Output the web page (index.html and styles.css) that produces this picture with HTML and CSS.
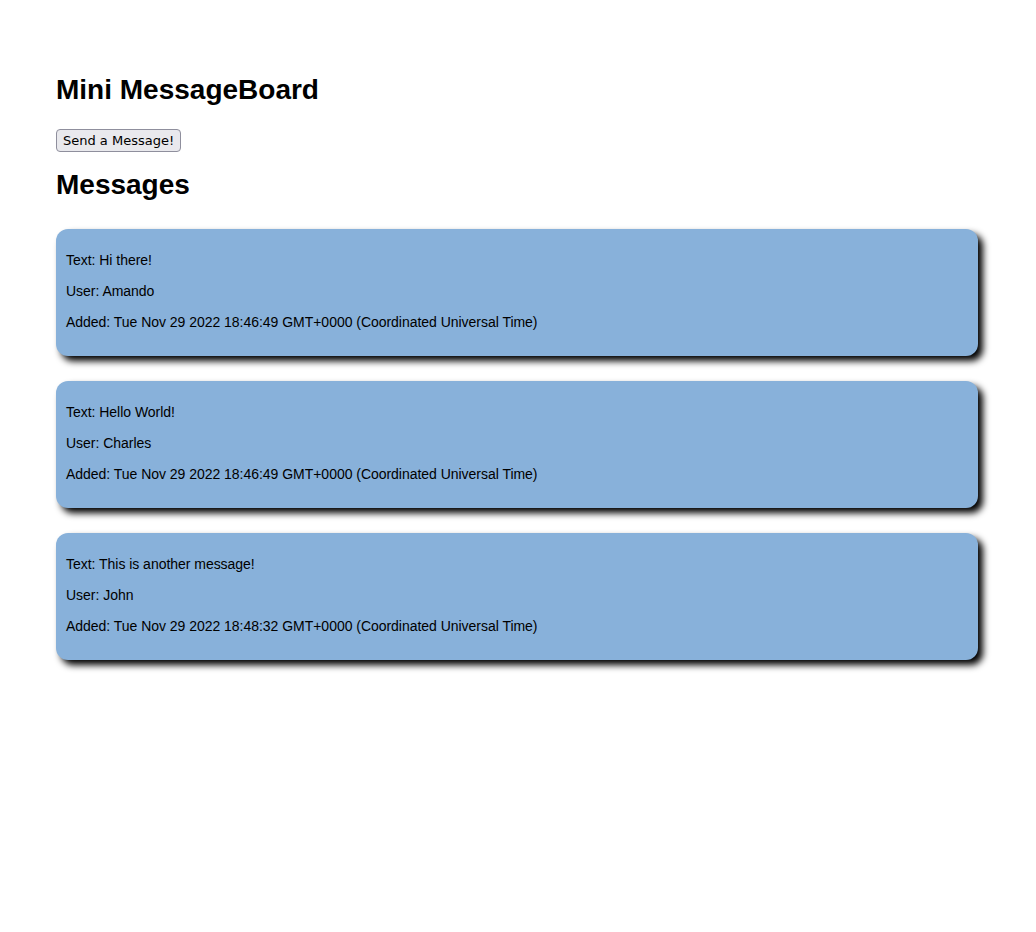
FILE: index.html
```html
<!DOCTYPE html>
<html>
<head>
<meta charset="utf-8">
<title>Mini MessageBoard</title>
<link rel="stylesheet" href="styles.css">
</head>
<body>
<div class="page">
  <h1 class="title">Mini MessageBoard</h1>
  <button class="send">Send a Message!</button>
  <h2 class="title sub">Messages</h2>
  <div class="list">
    <div class="card">
      <p>Text: Hi there!</p>
      <p>User: Amando</p>
      <p>Added: Tue Nov 29 2022 18:46:49 GMT+0000 (Coordinated Universal Time)</p>
    </div>
    <div class="card">
      <p>Text: Hello World!</p>
      <p>User: Charles</p>
      <p>Added: Tue Nov 29 2022 18:46:49 GMT+0000 (Coordinated Universal Time)</p>
    </div>
    <div class="card">
      <p>Text: This is another message!</p>
      <p>User: John</p>
      <p>Added: Tue Nov 29 2022 18:48:32 GMT+0000 (Coordinated Universal Time)</p>
    </div>
  </div>
</div>
</body>
</html>
```
FILE: styles.css
```css
html, body {
  margin: 0;
  padding: 0;
  background: #fff;
}
.page {
  padding: 58px 58px 40px 56px;
  font-family: "Liberation Sans", Arial, sans-serif;
  color: #000;
}
.title {
  font-size: 28px;
  font-weight: bold;
  margin: 16px 0 23px;
}
.sub {
  margin: 17px 0 28px;
}
.send {
  display: block;
  font-family: "DejaVu Sans", sans-serif;
  font-size: 13px;
  line-height: 17px;
  padding: 2px 6px;
  background: #e9e9ed;
  border: 1px solid #8f8f9d;
  border-radius: 4px;
  color: #000;
}
.list {
  display: flex;
  flex-direction: column;
  gap: 25px;
}
.card {
  background: #88b1da;
  border-radius: 12px;
  box-shadow: 5px 5px 7px #000;
  padding: 9px 10px 11px;
}
.card p {
  font-size: 14px;
  line-height: 17px;
  margin: 14px 0;
  letter-spacing: -0.03px;
}
```
